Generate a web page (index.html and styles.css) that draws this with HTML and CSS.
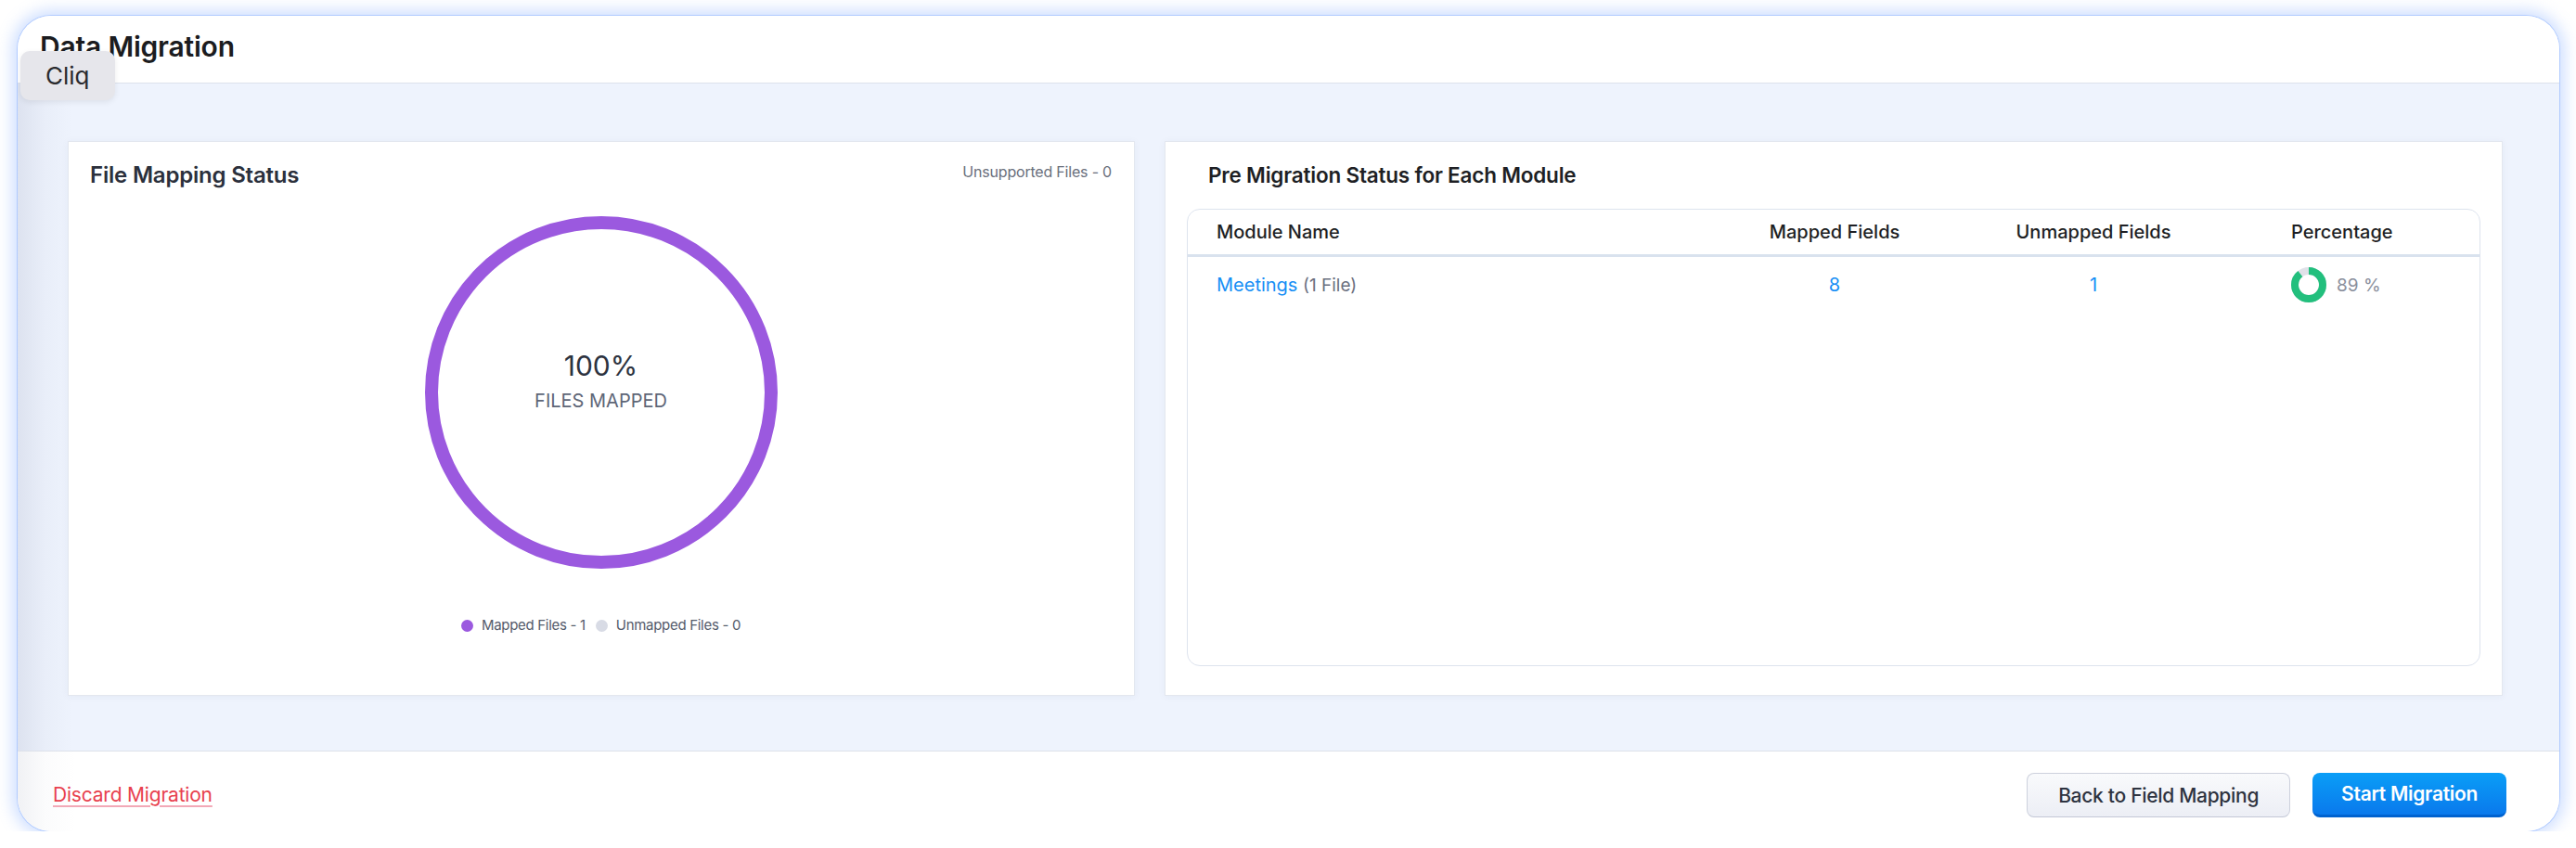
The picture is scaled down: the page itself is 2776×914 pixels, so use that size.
FILE: index.html
```html
<!DOCTYPE html>
<html lang="en">
<head>
<meta charset="utf-8">
<title>Data Migration</title>
<link rel="stylesheet" href="styles.css">
</head>
<body>
<div class="frame">
  <header class="top">
    <h1 class="title">Data Migration</h1>
    <div class="tooltip">Cliq</div>
  </header>
  <main class="content">
    <section class="card files">
      <div class="card-head">
        <h2 class="card-title">File Mapping Status</h2>
        <span class="unsupported">Unsupported Files - 0</span>
      </div>
      <div class="ring">
        <div class="ring-value">100%</div>
        <div class="ring-label">FILES MAPPED</div>
      </div>
      <div class="legend">
        <span class="legend-item"><i class="dot dot-mapped"></i>Mapped Files - 1</span>
        <span class="legend-item"><i class="dot dot-unmapped"></i>Unmapped Files - 0</span>
      </div>
    </section>
    <section class="card modules">
      <h2 class="card-title modules-title">Pre Migration Status for Each Module</h2>
      <div class="table">
        <div class="row row-head">
          <div class="cell cell-name">Module Name</div>
          <div class="cell cell-num">Mapped Fields</div>
          <div class="cell cell-num">Unmapped Fields</div>
          <div class="cell cell-pct">Percentage</div>
        </div>
        <div class="row row-body">
          <div class="cell cell-name"><a class="module-link">Meetings</a> <span class="file-count">(1 File)</span></div>
          <div class="cell cell-num link-num">8</div>
          <div class="cell cell-num link-num">1</div>
          <div class="cell cell-pct">
            <svg class="donut" width="38" height="38" viewBox="0 0 38 38">
              <circle cx="19" cy="19" r="15" fill="none" stroke="#dfe1e8" stroke-width="8"/>
              <circle cx="19" cy="19" r="15" fill="none" stroke="#22bf7d" stroke-width="8" stroke-dasharray="83.9 94.25" transform="rotate(-90 19 19)"/>
            </svg>
            <span class="pct-text">89 %</span>
          </div>
        </div>
      </div>
    </section>
  </main>
  <footer class="bottom">
    <a class="discard">Discard Migration</a>
    <div class="actions">
      <button class="btn btn-secondary">Back to Field Mapping</button>
      <button class="btn btn-primary">Start Migration</button>
    </div>
  </footer>
</div>
</body>
</html>
```

FILE: styles.css
```css
* { box-sizing: border-box; }

html, body {
  margin: 0;
  padding: 0;
  background: #ffffff;
}

body {
  font-family: Inter, "Noto Sans", sans-serif;
  color: #2d3340;
}

.frame {
  position: relative;
  margin: 17px 0 0 19px;
  width: 2739px;
  height: 879px;
  border-radius: 36px;
  overflow: hidden;
  display: flex;
  flex-direction: column;
  background: #ffffff;
  box-shadow: 0 0 0 1px rgba(150, 185, 255, 0.6), 0 0 16px 6px rgba(140, 178, 255, 0.42);
}

.top {
  height: 73px;
  flex: none;
  padding: 15px 24px 0;
  border-bottom: 1px solid #dde2ec;
  background: #ffffff;
}

.title {
  margin: 0;
  font-size: 30px;
  line-height: 36px;
  font-weight: 600;
  color: #1b1c20;
  letter-spacing: -0.2px;
}

.tooltip {
  position: absolute;
  left: 3px;
  top: 38px;
  width: 102px;
  height: 53px;
  padding: 0 0 0 27px;
  border-radius: 10px;
  background: #e6e6eb;
  box-shadow: 0 2px 6px rgba(0, 0, 0, 0.08);
  font-size: 26px;
  line-height: 53px;
  color: #2a2a2e;
  font-weight: 400;
}

.content {
  flex: 1;
  display: grid;
  grid-template-columns: 1150fr 1442fr;
  gap: 32px;
  padding: 62px 61px 59px 54px;
  background: linear-gradient(to right, rgba(70, 80, 120, 0.10) 0, rgba(70, 80, 120, 0.03) 30px, rgba(70, 80, 120, 0) 60px), #eef3fd;
}

.card {
  background: #ffffff;
  border: 1px solid #e3e7ef;
  box-shadow: 0 1px 8px rgba(40, 50, 90, 0.05);
}

.files {
  display: flex;
  flex-direction: column;
  align-items: center;
  padding: 22px 24px 0 23px;
}

.card-head {
  align-self: stretch;
  display: flex;
  justify-content: space-between;
  align-items: flex-start;
}

.card-title {
  margin: 0;
  font-size: 24px;
  line-height: 28px;
  font-weight: 600;
  color: #2b303c;
  letter-spacing: -0.2px;
}

.unsupported {
  font-size: 16px;
  line-height: 20px;
  color: #6a6f7c;
  letter-spacing: -0.2px;
}

.ring {
  margin-top: 30px;
  width: 380px;
  height: 380px;
  border: 14px solid #9b59df;
  border-radius: 50%;
  display: flex;
  flex-direction: column;
  align-items: center;
  justify-content: center;
  padding-bottom: 26px;
}

.ring-value {
  font-size: 30px;
  line-height: 36px;
  color: #2d3340;
  font-weight: 400;
}

.ring-label {
  margin-top: 8px;
  font-size: 20px;
  line-height: 24px;
  color: #5e6677;
}

.legend {
  margin-top: 51px;
  display: flex;
  gap: 11px;
  font-size: 15px;
  line-height: 20px;
  color: #555b6b;
  letter-spacing: -0.3px;
}

.legend-item {
  display: inline-flex;
  align-items: center;
  gap: 9px;
}

.dot {
  display: inline-block;
  width: 13px;
  height: 13px;
  border-radius: 50%;
}

.dot-mapped { background: #9b59df; }
.dot-unmapped { background: #d8dbe5; }

.modules {
  display: flex;
  flex-direction: column;
  padding: 22px 23px 31px 23px;
}

.modules-title {
  padding-left: 23px;
  font-size: 22.5px;
  color: #1e1f24;
}

.table {
  flex: 1;
  margin-top: 22px;
  border: 1px solid #dde3ee;
  border-radius: 14px;
}

.row {
  display: grid;
  grid-template-columns: 601px 192px 366px 1fr;
  align-items: center;
}

.row-head {
  height: 51px;
  border-bottom: 3px solid #d9e2ee;
  font-size: 20px;
  font-weight: 500;
  color: #1e1f24;
}

.row-body {
  height: 60px;
  font-size: 20px;
}

.cell-name { padding-left: 31px; }
.cell-num { text-align: center; }
.cell-pct {
  padding-left: 30px;
  display: flex;
  align-items: center;
  gap: 11px;
}

.module-link {
  color: #168ef5;
  text-decoration: none;
}

.file-count {
  color: #6b7080;
  font-size: 19px;
}

.link-num { color: #168ef5; }

.donut { display: block; }

.pct-text {
  color: #8a8f9c;
  font-size: 19px;
}

.bottom {
  height: 87px;
  flex: none;
  border-top: 1px solid #dde1ea;
  display: flex;
  align-items: center;
  justify-content: space-between;
  padding: 8px 57px 0 38px;
  background: linear-gradient(to right, rgba(70, 80, 120, 0.08) 0, rgba(70, 80, 120, 0.02) 30px, rgba(70, 80, 120, 0) 64px), #ffffff;
}

.discard {
  color: #e8414e;
  font-size: 21px;
  line-height: 26px;
  text-decoration: underline;
  text-decoration-color: #f2a9b7;
  text-underline-offset: 4px;
  text-decoration-thickness: 1.5px;
  letter-spacing: -0.2px;
}

.actions {
  display: flex;
  gap: 24px;
}

.btn {
  height: 48px;
  border-radius: 8px;
  font-family: Inter, "Noto Sans", sans-serif;
  font-size: 21px;
  letter-spacing: -0.3px;
  cursor: pointer;
}

.btn-secondary {
  padding: 0 33px;
  background: linear-gradient(#f9fafc, #eceef5);
  border: 1px solid #cdd1dd;
  border-bottom-color: #c3c8d6;
  color: #2e3340;
  font-weight: 500;
}

.btn-primary {
  padding: 0 31px;
  background: linear-gradient(#0a9ef7, #0a79ec);
  border: 0;
  border-bottom: 3px solid #0062cf;
  color: #ffffff;
  font-weight: 600;
}
```
